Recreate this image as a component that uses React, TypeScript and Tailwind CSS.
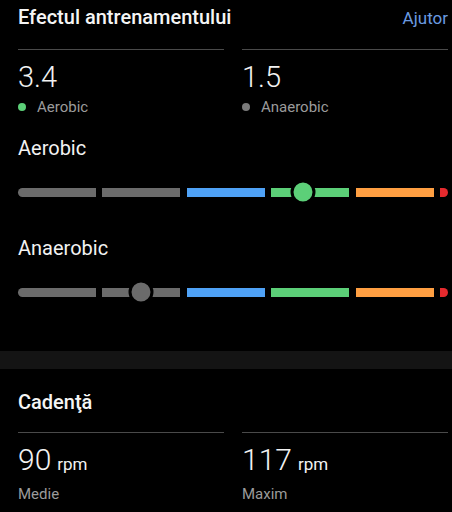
type Seg = { color: string; knob?: number };

const grayBar = "bg-[#6b6b6b]";

function EffectBar({ knobSeg, knobPos, knobColor }: { knobSeg: number; knobPos: string; knobColor: string }) {
  const segs = [
    "bg-[#6b6b6b] rounded-l-full",
    "bg-[#6b6b6b]",
    "bg-[#4fa2f6]",
    "bg-[#5ccf78]",
    "bg-[#ff9f42]",
  ];
  return (
    <div className="flex h-[24px] items-center gap-[6.5px]">
      {segs.map((cls, i) => (
        <div key={i} className={`relative h-[9px] flex-1 ${cls}`}>
          {i === knobSeg && (
            <div
              className={`absolute top-1/2 h-[25px] w-[25px] -translate-x-1/2 -translate-y-1/2 rounded-full border-[3.5px] border-black ${knobColor} ${knobPos}`}
            />
          )}
        </div>
      ))}
      <div className="h-[9px] w-[8px] rounded-r-full bg-[#e52a2e]" />
    </div>
  );
}

function Stat({ value, unit, label, dot }: { value: string; unit?: string; label: string; dot?: string }) {
  return (
    <div className="flex-1 border-t border-[#4a4a4a]">
      <div className={`mt-[11px] flex items-baseline font-light leading-[32px] text-[#f2f2f2] ${unit ? "text-[30px]" : "text-[29px]"}`}>
        {value}
        {unit && <span className="ml-[6px] text-[17px] font-normal">{unit}</span>}
      </div>
      <div className="mt-[4px] flex items-center text-[15px] leading-[20px] text-[#9b9b9b]">
        {dot && <span className={`mr-[11px] h-[8px] w-[8px] rounded-full ${dot}`} />}
        {label}
      </div>
    </div>
  );
}

export default function App() {
  return (
    <div className="h-[512px] w-[452px] overflow-hidden bg-black font-['Roboto',sans-serif]">
      <div className="pl-[18px] pr-[4px]">
        <div className="flex items-baseline justify-between pt-[5px] leading-[24px]">
          <h1 className="text-[20px] font-medium text-[#f5f5f5]">Efectul antrenamentului</h1>
          <span className="text-[17px] text-[#6a9ae0]">Ajutor</span>
        </div>

        <div className="mt-[19px] flex gap-[18px]">
          <Stat value="3.4" label="Aerobic" dot="bg-[#5ccf78]" />
          <Stat value="1.5" label="Anaerobic" dot="bg-[#7a7a7a]" />
        </div>

        <h2 className="mt-[19px] text-[20px] leading-[24px] text-[#f2f2f2]">Aerobic</h2>
        <div className="mt-[20px]">
          <EffectBar knobSeg={3} knobPos="left-[40.5%]" knobColor="bg-[#5ccf78]" />
        </div>

        <h2 className="mt-[32px] text-[20px] leading-[24px] text-[#f2f2f2]">Anaerobic</h2>
        <div className="mt-[20px]">
          <EffectBar knobSeg={1} knobPos="left-[50%]" knobColor={grayBar} />
        </div>
      </div>

      <div className="mt-[47px] h-[18px] bg-[#141414]" />

      <div className="pl-[18px] pr-[4px]">
        <h2 className="mt-[21px] text-[20px] font-medium leading-[24px] text-[#f5f5f5]">Cadenţă</h2>
        <div className="mt-[18px] flex gap-[18px]">
          <Stat value="90" unit="rpm" label="Medie" />
          <Stat value="117" unit="rpm" label="Maxim" />
        </div>
      </div>
    </div>
  );
}
